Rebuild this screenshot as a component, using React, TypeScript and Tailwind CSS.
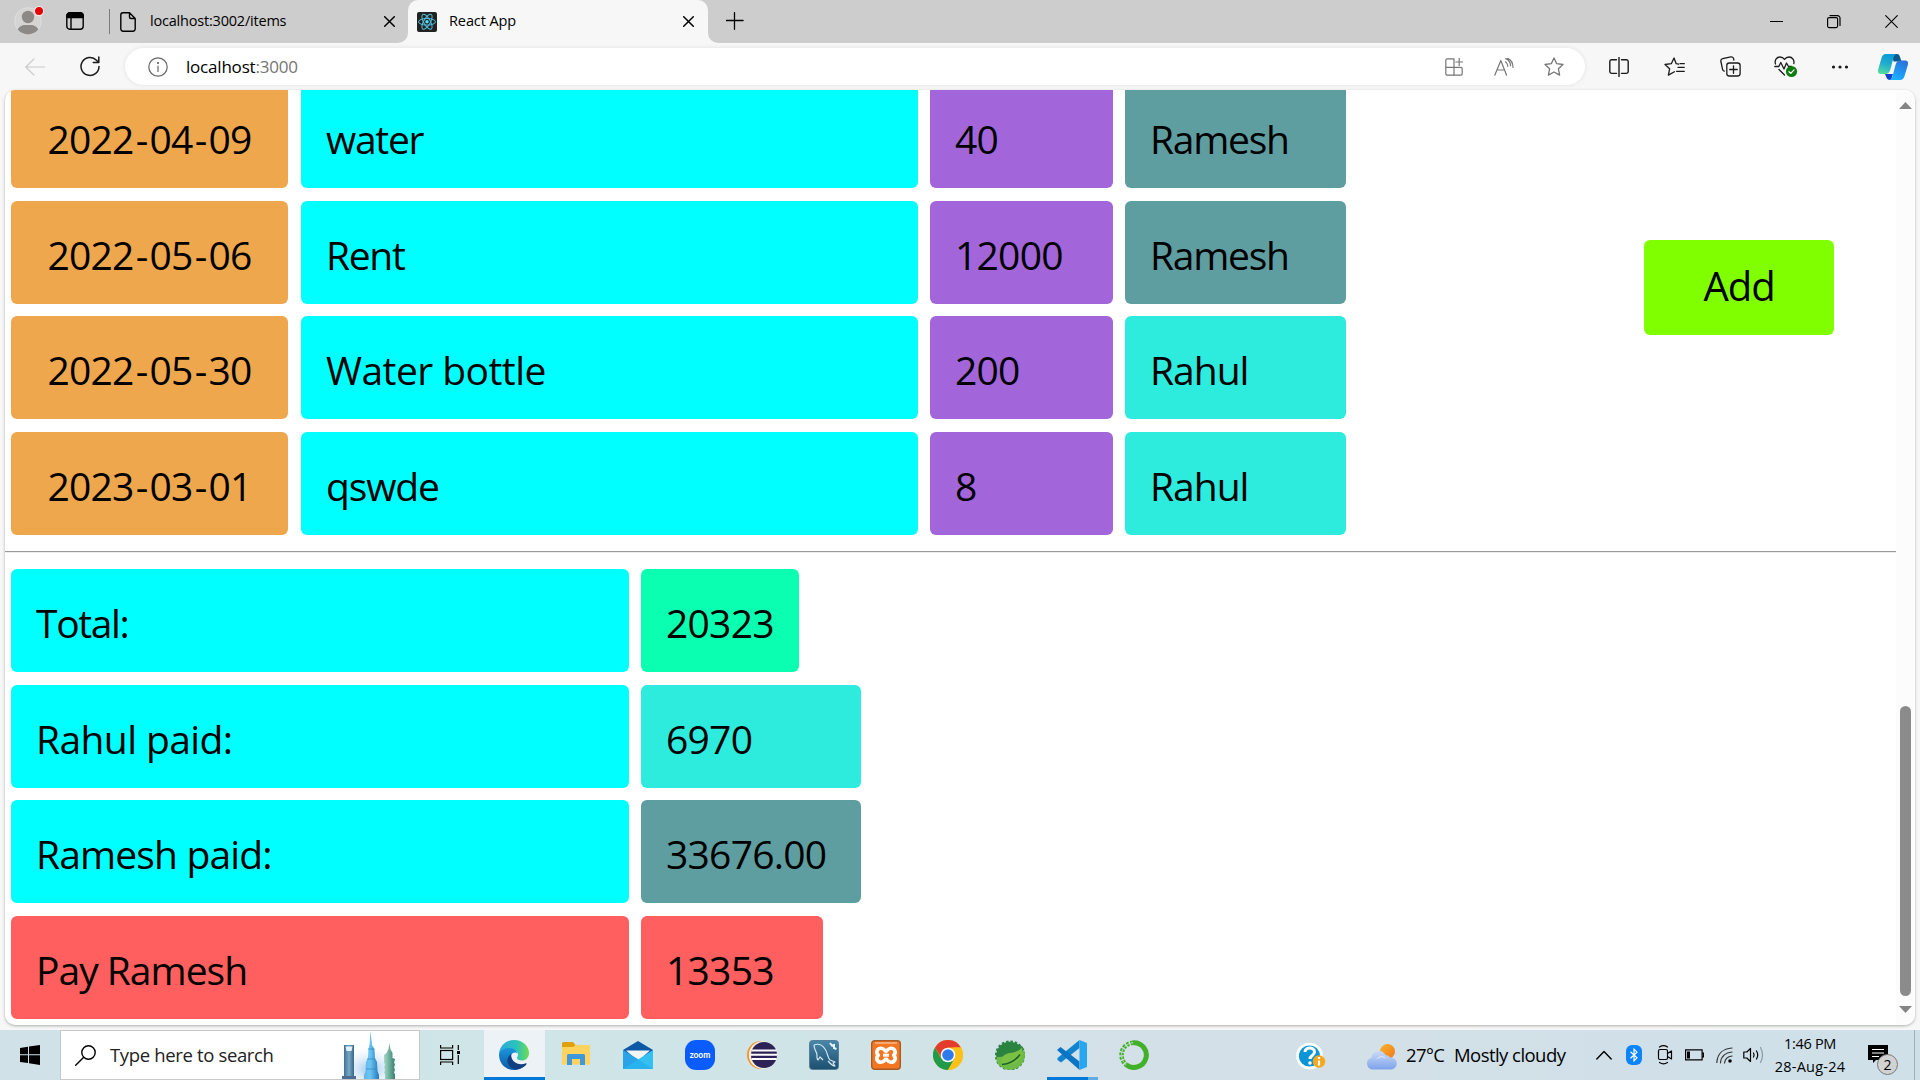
import React from "react";

type Row = { date: string; item: string; amount: string; person: string; height: string; gap: string };

const rows: Row[] = [
  { date: "2022-04-09", item: "water", amount: "40", person: "Ramesh", height: "h-[103px] -mt-[5px]", gap: "mb-[13px]" },
  { date: "2022-05-06", item: "Rent", amount: "12000", person: "Ramesh", height: "h-[103px]", gap: "mb-[12px]" },
  { date: "2022-05-30", item: "Water bottle", amount: "200", person: "Rahul", height: "h-[103px]", gap: "mb-[13px]" },
  { date: "2023-03-01", item: "qswde", amount: "8", person: "Rahul", height: "h-[103px]", gap: "mb-[16px]" },
];

const tracking: Record<string, string> = {
  water: "tracking-[-1.3px]",
  Rent: "tracking-[-1.3px]",
  "Water bottle": "tracking-[-0.55px]",
  qswde: "tracking-[-1.15px]",
  Ramesh: "tracking-[-1.25px]",
  Rahul: "tracking-[-1px]",
};

const totals = [
  { label: "Total:", value: "20323", bg: "bg-[#00ffff]", vbg: "bg-[#0affb0]", w: "w-[158px]", gap: "mb-[13px]", t: "tracking-[-1.35px]" },
  { label: "Rahul paid:", value: "6970", bg: "bg-[#00ffff]", vbg: "bg-[#2decdd]", w: "w-[220px]", gap: "mb-[12px]", t: "tracking-[-0.6px]" },
  { label: "Ramesh paid:", value: "33676.00", bg: "bg-[#00ffff]", vbg: "bg-[#5f9ea0]", w: "w-[220px]", gap: "mb-[13px]", t: "tracking-[-0.85px]" },
  { label: "Pay Ramesh", value: "13353", bg: "bg-[#ff5f5f]", vbg: "bg-[#ff5f5f]", w: "w-[182px]", gap: "", t: "tracking-[-1px]" },
];

function Cell({ className, textClass, children }: { className: string; textClass: string; children: React.ReactNode }) {
  return (
    <div className={`flex h-full shrink-0 items-center rounded-[6px] pt-[4px] ${className}`}>
      <span className={`whitespace-pre ${textClass}`}>{children}</span>
    </div>
  );
}

function DateText({ value }: { value: string }) {
  const [y, m, d] = value.split("-");
  return (
    <>
      {y}<span className="px-[2px]">-</span>{m}<span className="px-[2px]">-</span>{d}
    </>
  );
}

function Slot({ className, children }: { className: string; children?: React.ReactNode }) {
  return <div className={`flex shrink-0 items-center justify-center ${className}`}>{children}</div>;
}

const line = { fill: "none", stroke: "currentColor", strokeLinecap: "round" as const, strokeLinejoin: "round" as const };

function CloseX({ s = 11, w = 1.5 }: { s?: number; w?: number }) {
  return (
    <svg width={s} height={s} viewBox={`0 0 ${s} ${s}`} {...line} strokeWidth={w} className="shrink-0">
      <path d={`M.7 .7L${s - 0.7} ${s - 0.7}M${s - 0.7} .7L.7 ${s - 0.7}`} />
    </svg>
  );
}

function TitleBar() {
  return (
    <div className="flex h-[43px] items-start bg-[#cdcdcd] text-black">
      <svg width="34" height="38" viewBox="0 0 34 38" className="ml-[13px] shrink-0">
        <circle cx="15" cy="21" r="13.3" fill="#d6d4d2" stroke="#e0dfdd" strokeWidth="1" />
        <circle cx="15" cy="17" r="6.2" fill="#8c8986" />
        <path d="M4.7 29.5C6 26.500 9 25 12 25h6c3 0 6 1.500 7.300 4.500A13.300 13.300 0 0 1 4.700 29.500Z" fill="#8c8986" />
        <circle cx="26" cy="11" r="4.600" fill="#e60000" stroke="#f3e9e9" strokeWidth="1.200" />
      </svg>
      <svg width="18" height="18" viewBox="0 0 18 18" {...line} strokeWidth="1.4" className="mt-[12px] ml-[19px] shrink-0">
        <rect x=".8" y=".8" width="16.400" height="16.400" rx="3" />
        <path d="M1 5.500V3.500A2.500 2.500 0 0 1 3.500 1h11A2.500 2.500 0 0 1 17 3.500v2Z" fill="currentColor" />
        <path d="M5 6v11" />
      </svg>
      <div className="mt-[9px] ml-[25px] h-[25px] w-px bg-[#7b7b7b]" />
      <svg width="16" height="20" viewBox="0 0 16 20" {...line} strokeWidth="1.4" className="mt-[12px] ml-[10px] shrink-0">
        <path d="M3 .8h6.500L15.200 6.500V17a2.200 2.200 0 0 1-2.200 2.200H3A2.200 2.200 0 0 1 .8 17V3A2.200 2.200 0 0 1 3 .8ZM9.500 1v4a1.500 1.500 0 0 0 1.500 1.500h4" />
      </svg>
      <span className="ml-[14px] w-[234px] pt-[10px] text-[14.5px] leading-[21px] tracking-[-0.2px]">localhost:3002/items</span>
      <div className="mt-[16px]"><CloseX /></div>
      <div className="relative ml-[13px] flex h-[43px] w-[300px] items-start rounded-t-[10px] bg-[#f7f7f7]">
        <svg width="10" height="10" viewBox="0 0 10 10" className="absolute bottom-0 -left-[10px]"><path d="M10 0v10H0A10 10 0 0 0 10 0Z" fill="#f7f7f7" /></svg>
        <svg width="10" height="10" viewBox="0 0 10 10" className="absolute -right-[10px] bottom-0"><path d="M0 0v10h10A10 10 0 0 1 0 0Z" fill="#f7f7f7" /></svg>
        <svg width="20" height="20" viewBox="0 0 20 20" className="mt-[12px] ml-[9px] shrink-0" fill="none" stroke="#53c1de" strokeWidth="1">
          <rect width="20" height="20" rx="2" fill="#222" stroke="none" />
          <ellipse cx="10" cy="9.800" rx="8.500" ry="3.300" />
          <ellipse cx="10" cy="9.800" rx="8.500" ry="3.300" transform="rotate(60 10 9.800)" />
          <ellipse cx="10" cy="9.800" rx="8.500" ry="3.300" transform="rotate(120 10 9.800)" />
          <circle cx="10" cy="9.800" r="1.700" fill="#61dafb" stroke="none" />
        </svg>
        <span className="ml-[12px] w-[234px] pt-[10px] text-[14.5px] leading-[21px] tracking-[-0.1px]">React App</span>
        <div className="mt-[16px]"><CloseX /></div>
      </div>
      <svg width="18" height="18" viewBox="0 0 18 18" {...line} strokeWidth="1.300" className="mt-[12px] ml-[18px] shrink-0"><path d="M8.500 .7v16.600M.5 8.500h16.600" /></svg>
      <div className="ml-auto flex items-start">
        <div className="mt-[21px] h-px w-[13px] bg-black" />
        <svg width="14" height="14" viewBox="0 0 14 14" {...line} strokeWidth="1.200" className="mt-[15px] ml-[44px]">
          <rect x=".6" y="2.600" width="10" height="10" rx="1.500" />
          <path d="M3 .6h7.500A2.500 2.500 0 0 1 13 3.100V10.500" />
        </svg>
        <div className="mt-[15px] mr-[22px] ml-[44px]"><CloseX s={13} w={1.1} /></div>
      </div>
    </div>
  );
}

function Toolbar() {
  return (
    <div className="flex h-[47px] items-start bg-[#f7f7f7] pt-[5px] text-[#1b1b1b]">
      <Slot className="ml-[20px] h-[37px] w-[30px] text-[#c9c9c9]">
        <svg width="20" height="18" viewBox="0 0 20 18" {...line} strokeWidth="1.200"><path d="M9 .8L.8 9 9 17.200M1 9h18.500" /></svg>
      </Slot>
      <Slot className="ml-[24px] h-[37px] w-[32px]">
        <svg width="20" height="21" viewBox="0 0 20 21" {...line} strokeWidth="1.500"><path d="M19 10.500A9 9 0 1 1 16.500 4.200L18.500 6.200M18.800 1v5.400h-5.500" /></svg>
      </Slot>
      <div className="ml-[19px] flex h-[37px] w-[1460px] items-center rounded-full bg-white shadow-[0_0_5px_rgba(0,0,0,0.09)]">
        <svg width="20" height="20" viewBox="0 0 20 20" {...line} strokeWidth="1.200" className="ml-[23px] text-[#666]"><circle cx="10" cy="10" r="9.200" /><path d="M10 9v5.500" /><circle cx="10" cy="6" r=".5" fill="currentColor" /></svg>
        <span className="ml-[18px] text-[17px] leading-[24px] tracking-[-0.2px] text-black">localhost<span className="text-[#757575]">:3000</span></span>
        <div className="mr-[6px] ml-auto flex text-[#767676]">
          <Slot className="w-[50px]">
            <svg width="18" height="18" viewBox="0 0 18 18" {...line} strokeWidth="1.200"><path d="M9 17.300V.8H2.500A1.700 1.700 0 0 0 .8 2.500v13a1.700 1.700 0 0 0 1.700 1.700h13a1.700 1.700 0 0 0 1.700-1.700V11a1.700 1.700 0 0 0-1.700-1.700H.8M14.200 .5v7M10.800 4h7" /></svg>
          </Slot>
          <Slot className="w-[50px]">
            <svg width="20" height="18" viewBox="0 0 20 18" {...line} strokeWidth="1.200"><path d="M.8 17.200L6.800 2.500 12.600 17.200M3 12h7.800M11.500 3.800c1.500 1.200 2.200 2.500 2.400 4.500M11.800 .6c3.200 1.400 4.600 3.500 4.800 7M13.700 .4c3.500 1.500 5.200 4.500 5.300 9" /></svg>
          </Slot>
          <Slot className="w-[50px]">
            <svg width="20" height="20" viewBox="0 0 20 20" {...line} strokeWidth="1.300"><path d="M10 1l2.700 5.700 6.300.8-4.600 4.300 1.200 6.300L10 15l-5.600 3.100 1.200-6.300L1 7.500l6.300-.8Z" /></svg>
          </Slot>
        </div>
      </div>
      <div className="ml-[7px] flex h-[37px] items-center">
        <Slot className="w-[55px]">
          <svg width="20" height="20" viewBox="0 0 20 20" {...line} strokeWidth="1.400" className="mr-px"><path d="M10 .5v19M7.500 2.800h-5A1.800 1.800 0 0 0 .8 4.600v10a1.800 1.800 0 0 0 1.700 1.800h5M12.500 2.800h5a1.800 1.800 0 0 1 1.700 1.800v10a1.800 1.800 0 0 1-1.700 1.800h-5" /></svg>
        </Slot>
        <Slot className="w-[55px]">
          <svg width="21" height="20" viewBox="0 0 21 20" {...line} strokeWidth="1.300"><path d="M14.500 7.200L12.200 6.700 10 1 7.300 6.700 1 7.500l4.600 4.300-1.200 6.300 6-3.300M14 10.300h6.300M12.500 14.300h7.800M16 6.700h4.300" /></svg>
        </Slot>
        <Slot className="w-[55px]">
          <svg width="21" height="21" viewBox="0 0 21 21" {...line} strokeWidth="1.300" className="ml-px"><rect x="6.800" y="7" width="13.300" height="13" rx="2.500" /><path d="M13.500 9.800v7.500M9.700 13.500h7.500M4.200 15.200c-1-.4-1.500-1-1.700-2L.9 5.500C.6 4.200 1.400 3 2.700 2.700L10.800 .9c1.300-.3 2.500.5 2.800 1.800l.3 1.300" /></svg>
        </Slot>
        <Slot className="w-[55px]">
          <svg width="24" height="22" viewBox="0 0 24 22" {...line} strokeWidth="1.300" className="ml-[3px]"><path d="M1.500 8C.3 4.500 2.500 1 6 1c2 0 3.500 1 4.500 2.400C11.500 2 13 1 15 1c3.500 0 5.600 3.300 4.800 6.500M.8 10.500h4l2-4 3.200 6.500L12.500 7l2 3.500h3M5 13.500l5.500 5.500" /><circle cx="17.500" cy="15.500" r="5.600" fill="#107c10" stroke="none" /><path d="M15 15.700l1.800 1.700 3.200-3.500" stroke="#fff" /></svg>
        </Slot>
        <Slot className="w-[55px]">
          <svg width="18" height="4" viewBox="0 0 18 4" fill="currentColor"><circle cx="2.500" cy="2" r="1.600" /><circle cx="9" cy="2" r="1.600" /><circle cx="15.500" cy="2" r="1.600" /></svg>
        </Slot>
        <Slot className="w-[52px]">
          <svg width="32" height="28" viewBox="0 0 32 28">
            <defs>
              <linearGradient id="cpA" x1="0.500" y1="0" x2="0.200" y2="1"><stop offset="0" stopColor="#0a9bd8" /><stop offset=".5" stopColor="#22aecb" /><stop offset="1" stopColor="#55dfa0" /></linearGradient>
              <linearGradient id="cpB" x1="0.800" y1="0" x2="0.300" y2="1"><stop offset="0" stopColor="#2c6fdb" /><stop offset="1" stopColor="#17b4ff" /></linearGradient>
            </defs>
            <path d="M15 1h5c2 0 2.500 1.500 3 3l1.500 4.500h-8Z" fill="#0c5b8c" />
            <path d="M8 21h8l-2 6h-1c-2 0-3-1-3.500-2.500Z" fill="#1440cf" />
            <path d="M9 1h11c-2 .3-3 2-3.600 4L13.500 16c-1 3.500-2.500 5-5 5H4C1.500 21 .6 19.500 1 17L4.500 5C5.300 2.500 6.500 1 9 1Z" fill="url(#cpA)" />
            <path d="M23 27H12c2-.3 3-2 3.600-4L18.500 12c1-3.500 2.500-4.500 5-4.500H28c2.500 0 3.400 1.500 3 4L27.500 23c-.8 2.500-2 4-4.500 4Z" fill="url(#cpB)" />
          </svg>
        </Slot>
      </div>
    </div>
  );
}

function Page() {
  return (
    <div className="h-[940px] bg-[#f7f7f7] pr-[5px] pl-[5px]">
      <div className="flex h-[935px] overflow-hidden rounded-[10px] bg-white shadow-[0_1px_3px_rgba(0,0,0,0.3)]">
        <div className="w-[1891px] shrink-0 text-[39px] leading-[50px] text-black">
          <div className="flex justify-between">
            <div>
              {rows.map((r) => (
                <div key={r.date} className={`flex pl-[6px] ${r.height} ${r.gap}`}>
                  <Cell className="w-[277px] justify-center bg-[#eea74c]" textClass="tracking-[-0.74px]"><DateText value={r.date} /></Cell>
                  <Cell className="ml-[13px] w-[617px] bg-[#00ffff] pl-[25px]" textClass={tracking[r.item]}>{r.item}</Cell>
                  <Cell className="ml-[12px] w-[183px] bg-[#a366da] pl-[25px]" textClass="tracking-[-0.74px]">{r.amount}</Cell>
                  <Cell className={`ml-[12px] w-[221px] pl-[25px] ${r.person === "Rahul" ? "bg-[#2decdd]" : "bg-[#5f9ea0]"}`} textClass={tracking[r.person]}>{r.person}</Cell>
                </div>
              ))}
            </div>
            <button className="mt-[150px] mr-[62px] flex h-[95px] w-[190px] items-center justify-center rounded-[6px] bg-[#80ff00] pb-[4px] text-[40px] tracking-[-1px]">Add</button>
          </div>
          <div className="h-[2px] border-t border-[#999] bg-[#eee]" />
          <div className="pt-[16px] pl-[6px]">
            {totals.map((t) => (
              <div key={t.label} className={`flex h-[103px] ${t.gap}`}>
                <Cell className={`w-[618px] pl-[25px] ${t.bg}`} textClass={t.t}>{t.label}</Cell>
                <Cell className={`ml-[12px] pl-[25px] ${t.w} ${t.vbg}`} textClass="tracking-[-0.74px]">{t.value}</Cell>
              </div>
            ))}
          </div>
        </div>
        <div className="flex flex-1 flex-col items-center bg-[#fcfcfc]">
          <svg width="13" height="7" viewBox="0 0 13 7" className="mt-[12px] shrink-0"><path d="M6.500 0L13 7H0Z" fill="#858585" /></svg>
          <div className="mt-[597px] h-[290px] w-[11px] shrink-0 rounded-full bg-[#8b8b8b]" />
          <svg width="13" height="7" viewBox="0 0 13 7" className="mt-[10px] shrink-0"><path d="M0 0h13L6.500 7Z" fill="#858585" /></svg>
        </div>
      </div>
    </div>
  );
}

const SQ = "h-[50px] w-[62px]";

function Taskbar() {
  return (
    <div className="flex h-[50px] bg-[linear-gradient(90deg,#d0e2e8_0%,#cfe5e7_25%,#d0e4e7_45%,#d4e0e8_60%,#cfe0e8_100%)] text-black">
      <Slot className="w-[60px]">
        <svg width="20" height="20" viewBox="0 0 20 20"><path d="M0 3L8 1.700V9.300H0ZM9 1.600L20 0V9.300H9ZM0 10.300H8V18L0 17ZM9 10.300H20V20L9 18.300Z" /></svg>
      </Slot>
      <div className="flex w-[360px] items-center border border-[#c8c8c8] bg-white">
        <svg width="21" height="21" viewBox="0 0 21 21" {...line} strokeWidth="1.400" className="ml-[14px]"><circle cx="13.500" cy="7.500" r="6.700" /><path d="M8.700 12.300L.7 20.300" /></svg>
        <span className="ml-[14px] text-[18.500px] leading-[26px] tracking-[-0.35px] text-[#222]">Type here to search</span>
        <svg width="74" height="48" viewBox="0 0 74 48" className="mr-[13px] ml-auto">
          <defs>
            <radialGradient id="glow"><stop offset="0" stopColor="#9cc6ee" /><stop offset="1" stopColor="#fff" stopOpacity="0" /></radialGradient>
            <linearGradient id="tw"><stop offset="0" stopColor="#3d7195" /><stop offset=".5" stopColor="#79a9c4" /><stop offset="1" stopColor="#35678b" /></linearGradient>
            <linearGradient id="tb"><stop offset="0" stopColor="#5bb8ea" /><stop offset=".4" stopColor="#6cc5f2" /><stop offset="1" stopColor="#2479b8" /></linearGradient>
            <linearGradient id="tg"><stop offset="0" stopColor="#a5d8c8" /><stop offset="1" stopColor="#37806c" /></linearGradient>
          </defs>
          <ellipse cx="38" cy="38" rx="37" ry="25" fill="url(#glow)" />
          <path d="M12 14h10v32H12Z" fill="url(#tw)" />
          <path d="M13.500 15.500h7L19.500 20h-5Z" fill="#e5f0f7" />
          <path d="M10 48v-3h14v3Z" fill="#4b6f92" />
          <path d="M38.500 0L40 14l2.500 4L43 27l2 4 .5 9 1.500 4v4H32v-4l1.500-4 .5-9 2-4 .5-9 1-4Z" fill="url(#tb)" />
          <path d="M36 18h6M35 28h8M34 38h11" stroke="#2f86c0" strokeWidth=".7" />
          <path d="M57.500 12l.8 6 2.200 4v5l2.500 1-1 4 1 1-1 4 1 1-1 4 1 1v5H53v-5l-1-1 1-4-1-1 1-4-1-1V24l2.500-2 2-4Z" fill="url(#tg)" />
        </svg>
      </div>
      <Slot className="mr-[4px] w-[60px]">
        <svg width="20" height="20" viewBox="0 0 20 20" fill="none" stroke="#000" strokeWidth="1.200"><rect x=".6" y="5.500" width="12" height="9" /><path d="M.6 0v3h12V0M.6 20v-3h12v3M18.300 0v5M18.300 10v9" /><path d="M17 6h3v3h-3Z" fill="#000" stroke="none" /></svg>
      </Slot>
      <div className="flex h-[50px] w-[61px] flex-col bg-[#ecf2f5]">
        <svg width="30" height="30" viewBox="0 0 30 30" className="mt-[10px] ml-[15px]">
          <defs>
            <linearGradient id="edA" x1="0" y1=".5" x2="1" y2=".5"><stop offset="0" stopColor="#2ea7dc" /><stop offset=".6" stopColor="#2bc4b8" /><stop offset="1" stopColor="#71dc4f" /></linearGradient>
            <linearGradient id="edB" x1="0" y1="0" x2="0" y2="1"><stop offset="0" stopColor="#1b96dc" /><stop offset="1" stopColor="#0c59a4" /></linearGradient>
          </defs>
          <path d="M0 14C.5 6 7 0 15 0c9 0 15 6.500 15 13 0 5-3.500 7.500-7 7.500-3 0-5-1-5-2.500 0-1 1-1.500 1-3.500 0-3-3-5.500-7.500-5.500C6 9 1.500 11 0 14Z" fill="url(#edA)" />
          <path d="M0 14C1.500 10 6 7.500 11 8c4 .3 7 2.500 7.500 5.500C17 11.500 12 12 12 17c0 7 7 11 15.500 6.500C25 27.500 20.500 30 15 30 6.500 30-.3 23 0 14Z" fill="url(#edB)" />
          <path d="M12 14c-4 3-5 8-1 12.500 4 4 11 3.500 16-1.500.8-1 .5-1.800 0-1.700C19 26 12 22 12 14Z" fill="#123f7f" />
        </svg>
        <div className="mt-[7px] h-[3px] w-full bg-[#0078d7]" />
      </div>
      <Slot className={SQ}>
        <svg width="28" height="26" viewBox="0 0 28 26"><path d="M0 1.500A1.500 1.500 0 0 1 1.500 0H11l2.500 3H27v4H0Z" fill="#dfa008" /><path d="M0 5h11l2.500-2H27a1 1 0 0 1 1 1v18.500H0Z" fill="#ffd35d" /><path d="M5 13.500A1.500 1.500 0 0 1 6.500 12h15a1.500 1.500 0 0 1 1.500 1.500V23h-5v-6h-8v6H5Z" fill="#3f97dc" /></svg>
      </Slot>
      <Slot className={SQ}>
        <svg width="30" height="28" viewBox="0 0 30 28"><path d="M0 9L15 0l15 9v6H0Z" fill="#0c59a5" /><path d="M3 9.500h24L15 20Z" fill="#f4f4f4" /><path d="M0 9l14 9 16 10H0Z" fill="#2396df" /><path d="M30 9L0 28h30Z" fill="#35c0f2" /><path d="M0 9v19L15.500 18.500Z" fill="#2aa3e8" /><path d="M30 28L15.500 18.500 0 28Z" fill="#28b3ee" /></svg>
      </Slot>
      <Slot className={SQ}>
        <svg width="30" height="30" viewBox="0 0 30 30"><rect width="30" height="30" rx="11" fill="#0b5cff" /><text x="15" y="17.500" fontSize="8.500" fontWeight="700" fill="#fff" textAnchor="middle" fontFamily="Lato, sans-serif">zoom</text></svg>
      </Slot>
      <Slot className={SQ}>
        <svg width="30" height="28" viewBox="0 0 30 28"><path d="M14 0A14 14 0 0 0 14 28Z" fill="#f7941e" /><circle cx="15.500" cy="14" r="13.700" fill="#f3eee8" /><circle cx="17" cy="14" r="13" fill="#2c2255" /><path d="M4.500 9.500h25.200M4 13.800h26M4.500 18h25.200" stroke="#fff" strokeWidth="2" /></svg>
      </Slot>
      <Slot className={SQ}>
        <svg width="30" height="30" viewBox="0 0 30 30"><defs><linearGradient id="my" x1="0" y1="0" x2="0" y2="1"><stop offset="0" stopColor="#4887a9" /><stop offset="1" stopColor="#1d4f70" /></linearGradient></defs><rect x=".5" y=".5" width="29" height="29" rx="3" fill="url(#my)" stroke="#55809a" /><path d="M5 5c5-2 9 1 11 4 3 4 2 8 5 11l5 2-2 1 2 3c-3 0-5-3-7-5M5 5c0 5 3 7 3 10 0 2-.5 4 1 5l2-3 3 3" fill="none" stroke="#d8e8f1" strokeWidth="1.200" strokeLinejoin="round" /><path d="M21 3l2 2.500 2-.5v3l2.500 1" stroke="#e8f2f8" strokeWidth="2" fill="none" /></svg>
      </Slot>
      <Slot className={SQ}>
        <svg width="30" height="30" viewBox="0 0 30 30"><rect x=".7" y=".7" width="28.600" height="28.600" rx="3" fill="#f37623" stroke="#a85a22" strokeWidth="1.400" /><path d="M4 3h22" stroke="#fbb98a" strokeWidth="1.500" /><path d="M10 8.200c3 0 3.500 2 5 3.300 1.500-1.300 2-3.300 5-3.300 4 0 5.500 4.500 2.700 7C25.500 18 24 22.200 20 22.200c-3 0-3.500-2-5-3.200-1.500 1.200-2 3.200-5 3.200-4 0-5.500-4.200-2.700-7-2.800-2.500-1.300-7 2.700-7Z" fill="none" stroke="#fff" strokeWidth="3.600" strokeLinejoin="round" /><path d="M12 15.200h6" stroke="#fff" strokeWidth="3" /></svg>
      </Slot>
      <Slot className={SQ}>
        <svg width="30" height="30" viewBox="0 0 30 30"><circle cx="15" cy="15" r="15" fill="#fbc116" /><path d="M2 7.500A15 15 0 0 1 28 7.500H15L9 18.500Z" fill="#e33b2e" /><path d="M2 7.500A15 15 0 0 0 15 30l6.500-11.500L15 15 8.500 18.700Z" fill="#219a49" /><path d="M28 7.500A15 15 0 0 1 15 30l6.500-11.300L20 7.500Z" fill="#fbc116" /><circle cx="15" cy="15" r="7.300" fill="#fff" /><circle cx="15" cy="15" r="5.800" fill="#2f7bed" /></svg>
      </Slot>
      <Slot className={SQ}>
        <svg width="30" height="30" viewBox="0 0 30 30"><circle cx="15" cy="15.500" r="13.800" fill="#2a8440" /><circle cx="15" cy="15.500" r="14" fill="none" stroke="#2a8440" strokeWidth="2.200" strokeDasharray="2.500 1.900" /><path d="M29.500 11A15 15 0 0 1 5 26C2 24 1 20 2 17Z" fill="#6dbb45" /><path d="M2 17C10 17 20 14 29.500 10L27 6 4 12Z" fill="#2a8440" /><path d="M7 24c-2-7 2-10 8-11 5-.7 9-2 12-5.500 1.500 8-1.500 14.500-8 16-4 1-8 1-12 .5Z" fill="#7ac143" /><path d="M7 24.500c8-.5 13-3 18-10" fill="none" stroke="#1c5e2d" strokeWidth="1.500" /></svg>
      </Slot>
      <div className={`${SQ} flex flex-col items-center`}>
        <svg width="30" height="30" viewBox="0 0 30 30" className="mt-[10px]"><path d="M22.500 0v8L4 22.500 .5 20v-2Z" fill="#1284cf" /><path d="M0 10l3.500-3L22.500 21.500V30Z" fill="#0b75c4" /><path d="M22.500 0L30 3v24l-7.500 3Z" fill="#29a6f0" /></svg>
        <div className="mt-[7px] flex h-[3px] w-[56px] self-end"><div className="w-[41px] bg-[#0078d7]" /><div className="w-[10px] bg-[#62ace4]" /></div>
      </div>
      <Slot className={SQ}>
        <svg width="30" height="30" viewBox="0 0 30 30" fill="none"><path d="M14 2.700A12.400 12.400 0 1 1 7 24.600" stroke="#43b02a" strokeWidth="5" /><path d="M14 2.700A12.400 12.400 0 0 0 7 24.600" stroke="#43b02a" strokeWidth="4.500" strokeDasharray="2.600 1.400" /><path d="M14 2.700A12.400 12.400 0 0 0 7 24.600" stroke="#d4e0e8" strokeWidth="1" strokeDasharray="2 2" /></svg>
      </Slot>
      <div className="ml-[131px] flex items-center">
        <svg width="30" height="28" viewBox="0 0 30 28" className="mt-[2px]"><circle cx="13.500" cy="14" r="13.300" fill="#fff" /><circle cx="13.500" cy="14" r="10.600" fill="#0a96d6" /><path d="M9 10c0-5.500 9.500-5.500 9.500 0 0 3.500-4.500 3.500-4.500 7" fill="none" stroke="#fff" strokeWidth="3" /><circle cx="14" cy="21" r="1.800" fill="#fff" /><circle cx="23" cy="19.500" r="6.200" fill="#f9a81b" /><path d="M23 18.500v5M23 15v2" stroke="#fff" strokeWidth="2.200" /></svg>
        <svg width="31" height="26" viewBox="0 0 31 26" className="mt-[4px] ml-[40px]"><defs><linearGradient id="cl" x1="0" y1="0" x2="0" y2="1"><stop offset="0" stopColor="#c9daf8" /><stop offset="1" stopColor="#7ea3ea" /></linearGradient><linearGradient id="sn" x1="0" y1="0" x2="1" y2="1"><stop offset="0" stopColor="#f7b52c" /><stop offset="1" stopColor="#f0761c" /></linearGradient></defs><circle cx="21.500" cy="7.500" r="7.500" fill="url(#sn)" /><path d="M6 25.500A6 6 0 0 1 5.500 13.800 7.500 7.500 0 0 1 19.500 11a6.500 6.500 0 0 1 5 2.500A6 6 0 0 1 25 25.500Z" fill="url(#cl)" /><path d="M11 15c2-2.500 6-3 8.500-1" fill="none" stroke="#e8effc" strokeWidth="1" /></svg>
        <span className="ml-[9px] w-[48px] text-[18.500px] leading-[26px] tracking-[-0.6px] whitespace-nowrap">27°C</span>
        <span className="w-[142px] text-[18.500px] leading-[26px] tracking-[-0.55px] whitespace-nowrap">Mostly cloudy</span>
      </div>
      <div className="flex items-center">
        <svg width="16" height="10" viewBox="0 0 16 10" {...line} strokeWidth="1.400"><path d="M.8 9L8 1.500 15.200 9" /></svg>
        <svg width="16" height="20" viewBox="0 0 16 20" className="ml-[14px]"><rect width="16" height="20" rx="6" fill="#0a84ff" /><path d="M4.500 6.800l6.500 6-3 3V4.200l3 3-6.500 6" fill="none" stroke="#fff" strokeWidth="1.200" /></svg>
        <svg width="16" height="20" viewBox="0 0 16 20" {...line} strokeWidth="1.200" className="ml-[15px]"><rect x="1.500" y="4.500" width="9" height="10" rx="1.500" /><path d="M10.500 8.500L14.500 6v8l-4-2.500M2.500 2c2.500-1.600 5.500-1.600 8 0M2.500 17.500c2.500 1.600 5.500 1.600 8 0" /></svg>
        <svg width="19" height="12" viewBox="0 0 19 12" fill="none" stroke="#000" strokeWidth="1.200" className="ml-[12px]"><path d="M.6 .8h16.500v10H.6ZM17.500 4h1v4h-1" /><path d="M2 2.500h3v7H2Z" fill="#000" stroke="none" /></svg>
        <svg width="17" height="17" viewBox="0 0 17 17" {...line} strokeWidth="1.200" className="ml-[12px]"><path d="M.8 15.500C1.500 7 7 1.500 16 1M4.500 15.800C5 9.500 9.500 5.500 16 5M8.500 16c.5-4 3.500-6.500 7.500-7" stroke="#333" /><circle cx="14" cy="14" r="1.800" fill="#000" stroke="none" /></svg>
        <svg width="21" height="18" viewBox="0 0 21 18" {...line} strokeWidth="1.200" className="ml-[10px]"><path d="M.8 6h3L7.500 2.500v13L3.800 12h-3ZM10.500 7c.8 1.300.8 2.700 0 4M13.500 5c1.600 2.600 1.600 5.400 0 8" /><path d="M17.500 1.500c2.600 4.800 2.600 10.200 0 15" stroke="#8a9aa2" /></svg>
      </div>
      <div className="ml-px w-[90px] pt-[2px] text-center text-[14.500px] leading-[23px] whitespace-nowrap">
        <div className="tracking-[-0.3px]">1:46 PM</div>
        <div className="tracking-[0.25px]">28-Aug-24</div>
      </div>
      <div className="relative ml-[13px] h-[50px] w-[34px]">
        <svg width="20" height="18" viewBox="0 0 20 18" className="mt-[15px]"><path d="M0 0h20v15H8l-3 3v-3H0Z" /><path d="M4 4.500h12M4 8h12M4 11.500h7" stroke="#fff" strokeWidth="1" /></svg>
        <div className="absolute top-[24px] left-[9px] flex h-[21px] w-[21px] items-center justify-center rounded-full border border-[#777] bg-[#d2d2d2] text-[14px] leading-[14px]">2</div>
      </div>
      <div className="ml-auto w-[6px] border-l border-[#9fb0b8]" />
    </div>
  );
}

export default function App() {
  return (
    <div className="h-[1080px] w-[1920px] overflow-hidden font-['Open_Sans','Noto_Sans',sans-serif]">
      <TitleBar />
      <Toolbar />
      <Page />
      <Taskbar />
    </div>
  );
}
